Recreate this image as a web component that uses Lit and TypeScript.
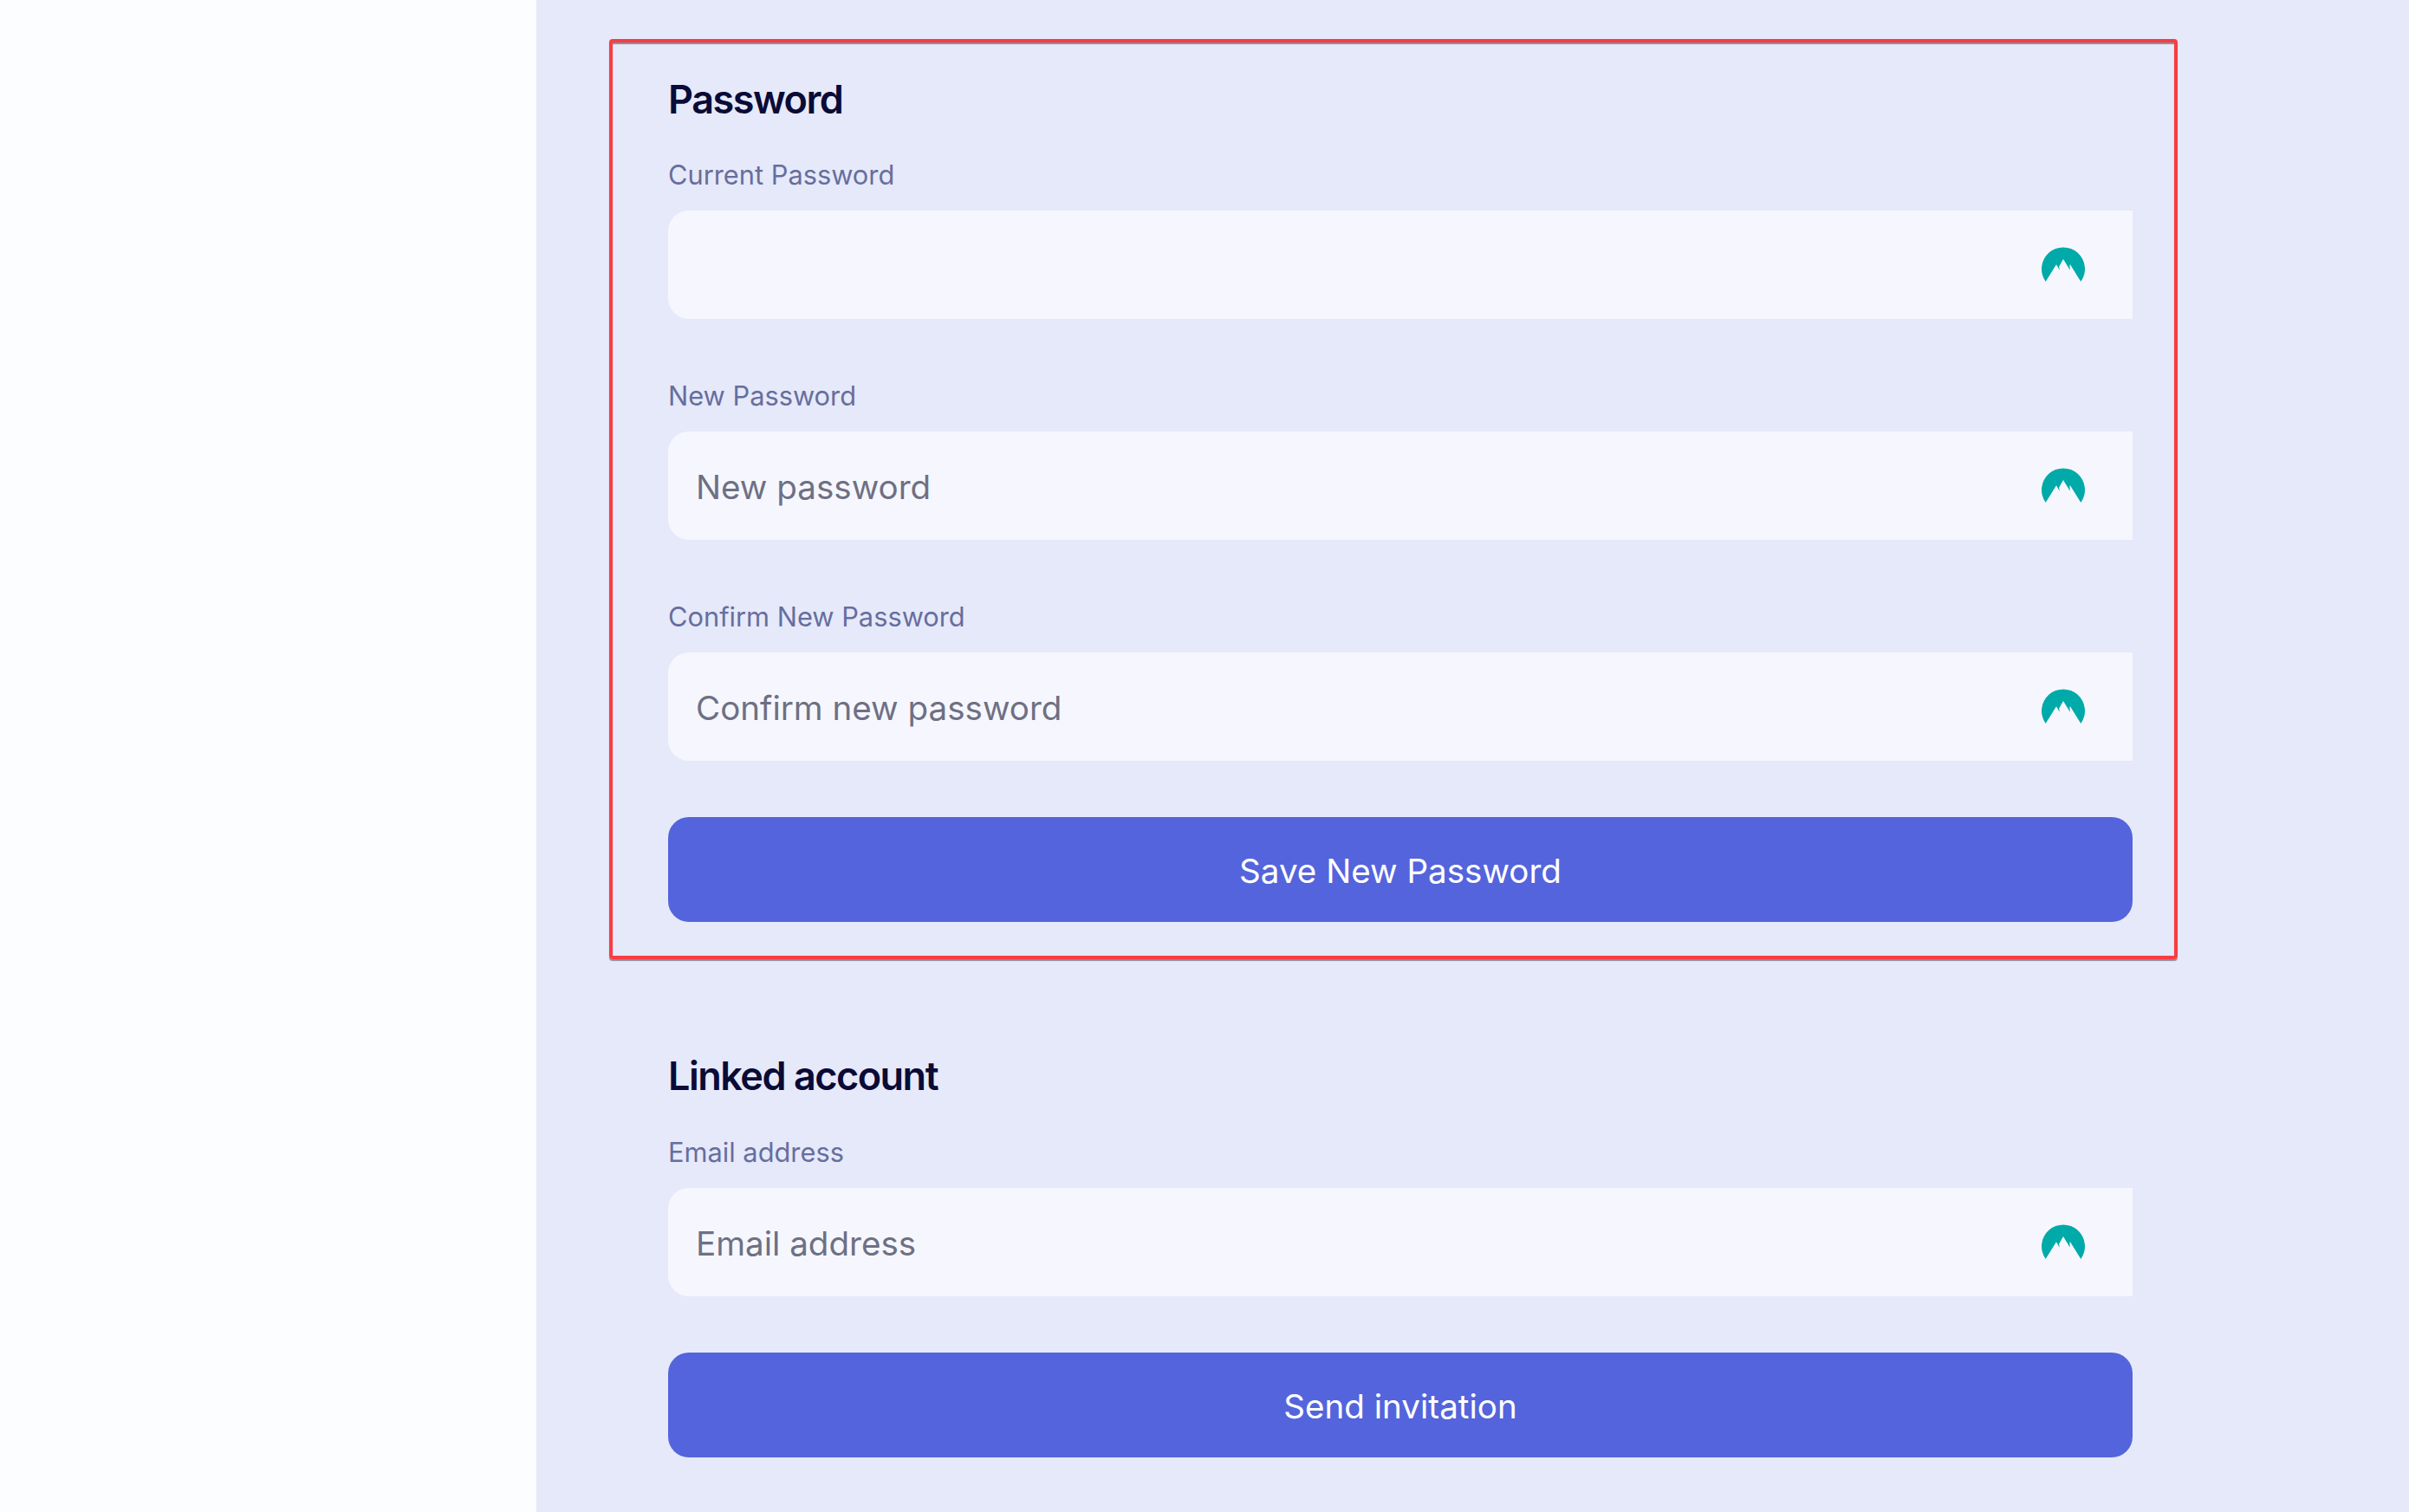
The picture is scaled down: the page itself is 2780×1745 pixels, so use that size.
import { LitElement, html, css, svg } from 'lit';
import { customElement } from 'lit/decorators.js';

const mountain = svg`<path fill="#00aaa8" d="M4.7 40A25 25 0 1 1 45.3 40L33 20.3 32.4 21 32.8 26.8 25 14 20.2 22.6 20.7 26.8 17 20.3Z"/>`;

@customElement('app-root')
export class AppRoot extends LitElement {
  static styles = css`
    :host {
      display: grid;
      grid-template-columns: 619px 1fr;
      min-height: 1745px;
      height: 1745px;
      overflow: hidden;
      background: #e6e9f9;
      font-family: 'Inter', 'Liberation Sans', sans-serif;
    }

    .sidebar {
      background: #fcfdff;
    }

    .main {
      padding: 45px 0 0 84px;
      width: 1810px;
      box-sizing: content-box;
    }

    .section {
      box-sizing: border-box;
      padding: 34px 48px 39px 64px;
      border: 4px solid transparent;
      border-radius: 4px;
    }

    .section.is-highlighted {
      padding-bottom: 39px;
      border-color: #fa3c42;
      box-shadow: 0 2px 1px rgba(60, 60, 70, 0.55), inset 0 2px 1px rgba(60, 60, 70, 0.55);
    }

    .section + .section {
      margin-top: 65px;
    }

    .section + .section h2 {
      margin-bottom: 36px;
    }

    h2 {
      margin: 0 0 35px;
      font-size: 45px;
      line-height: 64px;
      font-weight: 600;
      letter-spacing: -1.5px;
      color: #0a0b36;
    }

    label {
      display: block;
      margin-bottom: 21px;
      font-size: 30.8px;
      line-height: 40px;
      color: #666e9f;
    }

    .group {
      margin-bottom: 69px;
    }

    .group.is-last {
      margin-bottom: 65px;
    }

    .field {
      display: flex;
      align-items: center;
      height: 125px;
      padding: 0 55px 0 32px;
      box-sizing: border-box;
      border-radius: 24px 0 0 24px;
      background: #f6f7fe;
    }

    input {
      flex: 1;
      min-width: 0;
      margin-top: 2px;
      border: none;
      outline: none;
      padding: 0;
      background: transparent;
      font: inherit;
      font-size: 38.6px;
      color: #6e7084;
    }

    input::placeholder {
      color: #6e7084;
      opacity: 1;
    }

    .field svg {
      width: 50px;
      height: 40px;
      margin-top: -1px;
    }

    button {
      display: block;
      width: 100%;
      height: 121px;
      padding: 2px 0 0;
      border: none;
      border-radius: 24px;
      background: #5464dc;
      color: #fff;
      font: inherit;
      font-size: 38.6px;
      font-weight: 400;
    }
  `;

  private field(name: string, placeholder: string, last = false) {
    return html`
      <div class="group ${last ? 'is-last' : ''}">
        <label>${name}</label>
        <div class="field">
          <input type="text" placeholder=${placeholder} />
          <svg viewBox="0 0 50 40">${mountain}</svg>
        </div>
      </div>
    `;
  }

  render() {
    return html`
      <div class="sidebar"></div>
      <div class="main">
        <div class="section is-highlighted">
          <h2>Password</h2>
          ${this.field('Current Password', '')}
          ${this.field('New Password', 'New password')}
          ${this.field('Confirm New Password', 'Confirm new password', true)}
          <button>Save New Password</button>
        </div>
        <div class="section">
          <h2>Linked account</h2>
          ${this.field('Email address', 'Email address', true)}
          <button>Send invitation</button>
        </div>
      </div>
    `;
  }
}
